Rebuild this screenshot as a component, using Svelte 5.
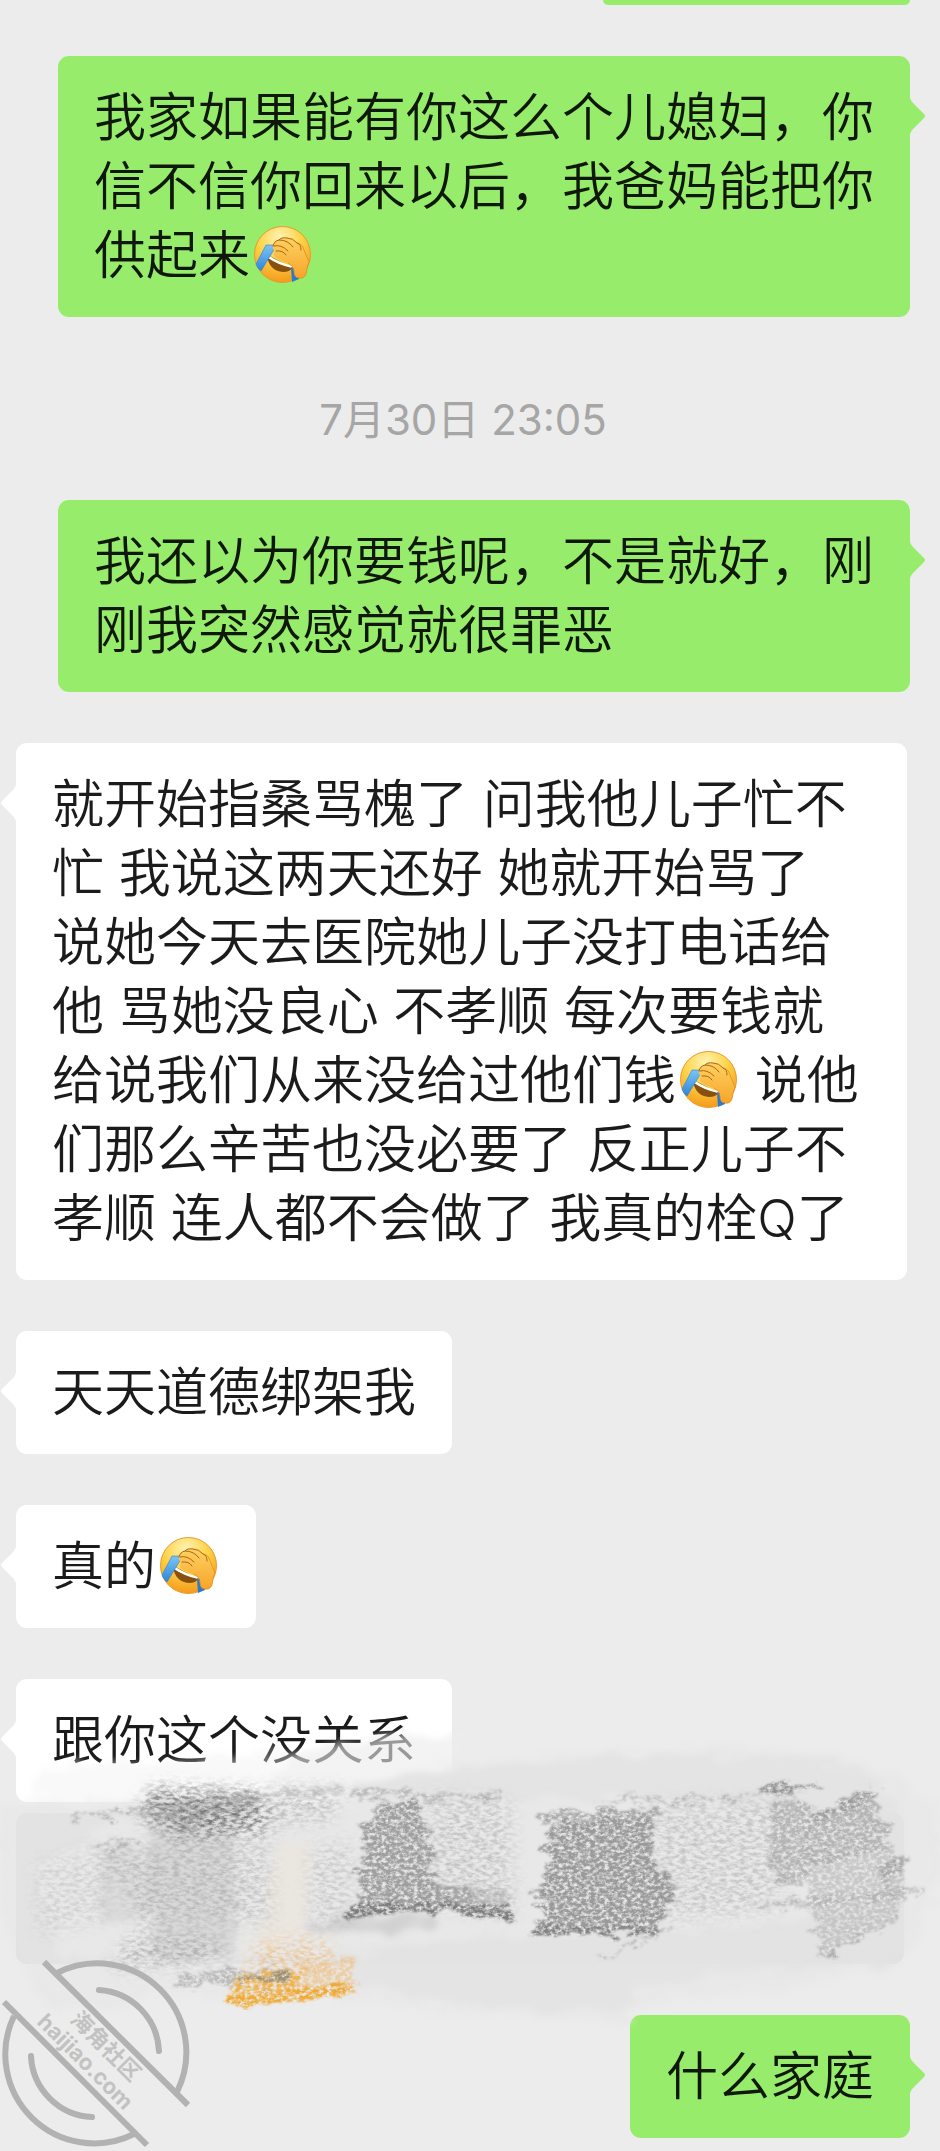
<script>
  // Messages above the time stamp, below it, and the ones under the crayon marks
  const earlier = [
    { from: 'me', text: '我家如果能有你这么个儿媳妇，你信不信你回来以后，我爸妈能把你供起来[facepalm]' }
  ];

  const later = [
    { from: 'me', text: '我还以为你要钱呢，不是就好，刚刚我突然感觉就很罪恶' },
    {
      from: 'her',
      text: '就开始指桑骂槐了 问我他儿子忙不忙 我说这两天还好 她就开始骂了 说她今天去医院她儿子没打电话给他 骂她没良心 不孝顺 每次要钱就给说我们从来没给过他们钱[facepalm] 说他们那么辛苦也没必要了 反正儿子不孝顺 连人都不会做了 我真的栓Q了'
    },
    { from: 'her', text: '天天道德绑架我' },
    { from: 'her', text: '真的[facepalm]' }
  ];

  const covered = { from: 'her', text: '跟你这个没关系' };
  const last = { from: 'me', text: '什么家庭' };

  // Split the text so that the emoji can be drawn between the parts
  function split(text) {
    return text.split('[facepalm]');
  }
</script>

{#snippet emoji()}
  <svg class="emoji" viewBox="0 0 57 57" role="img" aria-label="笑哭捂脸">
    <defs>
      <radialGradient id="face" cx="0.45" cy="0.2" r="0.8">
        <stop offset="0" stop-color="#fff3b4" />
        <stop offset="0.5" stop-color="#fdd245" />
        <stop offset="1" stop-color="#f59a1b" />
      </radialGradient>
      <linearGradient id="hand" x1="0" y1="0" x2="0" y2="1">
        <stop offset="0" stop-color="#fdd163" />
        <stop offset="1" stop-color="#f7a528" />
      </linearGradient>
      <linearGradient id="tear" x1="0" y1="0" x2="0" y2="1">
        <stop offset="0" stop-color="#7cc4f5" />
        <stop offset="1" stop-color="#2c86dc" />
      </linearGradient>
    </defs>
    <circle cx="28.5" cy="28.5" r="28" fill="url(#face)" stroke="#e99a2e" />
    <path d="M13 31 Q16 45 29 46 Q36 46 38 42 L16 30Z" fill="#87500f" />
    <path d="M14 29 Q26 37 39 40 L38 42 Q24 39 14 32Z" fill="#fff" />
    <path d="M12 19 L21 19 Q21 23 18 27 L7 45 Q3 42 2 38Z" fill="url(#tear)" stroke="#2f7fd0" stroke-width="0.6" />
    <path d="M37 41 L38 56 L45 53 L45 44Z" fill="#2879cf" />
    <path
      d="M19 20 Q20 15 25 14 Q27 11 33 12 Q39 12 43 17 Q48 17 50 24 L55 36 Q53 40 52 48 Q50 53 45 52 Q40 52 40 45 Q40 40 34 37 Q26 35 21 31 Q18 28 21 25 Q18 23 19 20Z"
      fill="url(#hand)"
    />
    <path
      d="M43 17 Q48 17 50 24 L55 36 Q53 40 52 48 Q50 53 45 52 Q40 52 40 45 Q40 40 34 37"
      fill="none"
      stroke="#e28a1f"
      stroke-width="0.8"
    />
    <path
      d="M19 20 Q20 15 25 14 Q34 14 39 21 M25 14 Q27 11 33 12 Q39 12 43 17 Q47 18 47 24 M20 20 Q27 18 34 25 M22 25 Q29 24 32 29"
      fill="none"
      stroke="#b0640f"
      stroke-width="1"
      stroke-linecap="round"
    />
  </svg>
{/snippet}

{#snippet bubble(message)}
  <div class="bubble {message.from}">
    {#each split(message.text) as part, i}{#if i > 0}{@render emoji()}{/if}{part}{/each}
    <svg class="tail" viewBox="0 0 16 36" aria-hidden="true">
      <path d="M0 0 Q1 3 3 5 L14 16 Q16 18 14 20 L3 31 Q1 33 0 36Z" />
    </svg>
  </div>
{/snippet}

<main class="chat">
  <div class="bubble me cut"></div>

  {#each earlier as message}
    {@render bubble(message)}
  {/each}

  <time datetime="07-30T23:05">7月30日 23:05</time>

  {#each later as message}
    {@render bubble(message)}
  {/each}

  <section class="smudged">
    {@render bubble(covered)}
    <div class="block"></div>

    <svg class="crayon" viewBox="0 -41 940 285" aria-hidden="true">
      <defs>
        <filter id="haze" x="-10%" y="-20%" width="120%" height="140%" color-interpolation-filters="sRGB">
          <feTurbulence type="fractalNoise" baseFrequency="0.03 0.09" numOctaves="4" seed="4" result="n" />
          <feDisplacementMap in="SourceGraphic" in2="n" scale="26" xChannelSelector="R" yChannelSelector="G" />
          <feGaussianBlur stdDeviation="3" />
        </filter>
        <filter id="grain" x="-10%" y="-20%" width="120%" height="140%" color-interpolation-filters="sRGB">
          <feTurbulence type="fractalNoise" baseFrequency="0.22 0.3" numOctaves="4" seed="8" result="n" />
          <feColorMatrix in="n" values="0 0 0 0 0  0 0 0 0 0  0 0 0 0 0  2.8 0 0 0 -0.7" result="dots" />
          <feTurbulence type="fractalNoise" baseFrequency="0.05 0.12" numOctaves="4" seed="5" result="wave" />
          <feDisplacementMap in="SourceGraphic" in2="wave" scale="26" xChannelSelector="R" yChannelSelector="G" result="rough" />
          <feGaussianBlur in="rough" stdDeviation="1" />
          <feComposite in2="dots" operator="in" />
        </filter>
        <filter id="dust" x="-20%" y="-30%" width="140%" height="160%" color-interpolation-filters="sRGB">
          <feTurbulence type="fractalNoise" baseFrequency="0.15 0.3" numOctaves="5" seed="21" result="n" />
          <feColorMatrix in="n" values="0 0 0 0 0  0 0 0 0 0  0 0 0 0 0  2.6 0 0 0 -0.95" result="dots" />
          <feGaussianBlur in="SourceGraphic" stdDeviation="9" />
          <feComposite in2="dots" operator="in" />
        </filter>
      </defs>

      <!-- pale base layer -->
      <g filter="url(#haze)">
        <path d="M0 82 L150 78 L350 62 L455 44 L640 32 L740 26 L850 40 L900 58 L940 90 L940 150 L905 240 L780 268 L640 282 L630 300 L460 292 L340 276 L160 272 L110 290 L40 280 L0 190Z" fill="#e5e5e5" fill-opacity="0.5" />
        <path d="M40 48 L240 36 L360 22 L460 10 L462 84 L250 92 L30 78Z" fill="#f0f0f0" fill-opacity="0.4" />
        <path d="M300 28 L455 12 L460 84 L250 84Z" fill="#e9e9e9" fill-opacity="0.35" />
        <path d="M350 60 L640 34 L860 44 L900 90 L900 240 L640 262 L620 292 L470 284 L350 262Z" fill="#e1e1e1" fill-opacity="0.75" />
      </g>
      <path d="M34 150 L110 100 L340 76 L720 80 L890 110 L880 190 L720 210 L500 216 L310 240 L60 240Z" fill="#e9e9e9" fill-opacity="0.7" filter="url(#haze)" />

      <!-- soft grey rubbing -->
      <g filter="url(#haze)">
        <path d="M150 74 L260 76 L235 110 L235 238 L150 236Z" fill="#bdbdbd" fill-opacity="0.36" />
        <path d="M100 130 L160 130 L150 200 L100 200Z" fill="#d0d0d0" fill-opacity="0.5" />
        <path d="M314 200 L436 196 L436 210 L310 212Z" fill="#c8c8c8" fill-opacity="0.7" />
        <path d="M275 122 L316 122 L305 220 L255 236Z" fill="#ebe5dd" fill-opacity="0.7" />
      </g>
      <g filter="url(#dust)" fill="#8d8d8d">
        <path d="M150 68 L265 72 L270 112 L180 120 L140 98Z" fill="#555" fill-opacity="0.75" />
        <path d="M100 130 L270 124 L272 202 L140 206Z" fill-opacity="0.4" />
        <path d="M35 145 L110 125 L110 200 L40 215Z" fill-opacity="0.25" />
        <path d="M130 215 L220 215 L230 240 L110 250Z" fill-opacity="0.55" />
        <path d="M275 68 L345 68 L330 100 L270 105Z" fill-opacity="0.5" />
        <path d="M430 76 L510 82 L515 195 L430 185Z" fill-opacity="0.4" />
        <path d="M650 86 L780 80 L780 190 L660 200Z" fill-opacity="0.38" />
        <path d="M310 130 L352 120 L350 200 L310 205Z" fill-opacity="0.35" />
      </g>

      <!-- hard strokes -->
      <g filter="url(#grain)" fill="none" stroke="#8f8f8f" stroke-linejoin="round">
        <path d="M68 98 L150 88 M92 127 L140 122" stroke-width="5" stroke-opacity="0.5" />
        <path d="M150 68 L185 65 L262 76 L345 68" stroke-width="7" stroke-opacity="0.3" />
        <path d="M158 92 L250 78 L170 104" stroke-width="16" stroke-opacity="0.4" />
        <path d="M168 264 L230 256 L292 254" stroke-width="12" stroke-opacity="0.5" />
        <path d="M355 76 L390 72 L430 76 L500 78" stroke-width="7" stroke-opacity="0.5" />
        <path d="M383 82 L420 82 L422 104 L438 134 L426 152 L440 164 L470 170 L480 186 L355 190 L362 158 L352 152 L368 136 L360 106 Z" fill="#8c8c8c" fill-opacity="0.8" stroke="none" />
        <path d="M348 190 L450 186 L512 193" stroke="#7d7d7d" stroke-width="10" />
        <path d="M430 164 L510 172 L510 188 L440 184Z" fill="#aaa" fill-opacity="0.6" stroke="none" />
        <path d="M540 98 L570 94 L660 94" stroke-width="9" stroke-opacity="0.7" />
        <path d="M560 100 L652 98 L655 150 L672 154 L668 182 L658 206 L538 206 L545 184 L534 172 L552 150 L542 126Z" fill="#8c8c8c" fill-opacity="0.85" stroke="none" />
        <path d="M532 210 L658 210" stroke="#848484" stroke-width="8" />
        <path d="M600 80 L720 80 L760 72 L815 66" stroke-width="4" stroke-opacity="0.5" />
        <path d="M765 72 L818 65" stroke-width="9" />
        <path d="M778 76 L810 78 L812 90 L804 164 L776 166 L766 120Z" fill="#9c9c9c" fill-opacity="0.65" stroke="none" />
        <path d="M808 104 L878 70 L878 98 L892 104 L886 128 L830 142 L800 150Z" fill="#a0a0a0" fill-opacity="0.7" stroke="none" />
        <path d="M812 99 L874 70" stroke-width="9" stroke-opacity="0.8" />
        <path d="M764 188 L822 180 L920 172" stroke="#a6a6a6" stroke-width="9" stroke-opacity="0.6" />
        <path d="M800 140 L890 128 L904 138 L906 160 L896 196 L820 236 L814 200Z" fill="#a8a8a8" fill-opacity="0.5" stroke="none" />
        <path d="M820 236 L896 200" stroke-width="4" stroke-opacity="0.6" />
        <path d="M882 156 L904 144" stroke-width="16" stroke-opacity="0.5" />
        <path d="M600 238 L670 208" stroke-width="3" stroke-opacity="0.5" />
      </g>

      <!-- orange crayon -->
      <path d="M256 224 L320 218 L345 250 L245 258Z" fill="#f0a94f" fill-opacity="0.55" filter="url(#dust)" />
      <g filter="url(#grain)" stroke="#eeb04c" fill="none">
        <path d="M236 254 L304 250 L300 268 L232 272Z" fill="#efb353" stroke="none" />
        <path d="M228 281 L290 275 L358 269" stroke-width="13" stroke="#efa935" />
        <path d="M300 242 L352 240 L354 266 L300 270Z" fill="#f0b668" fill-opacity="0.5" stroke="none" />
        <path d="M240 262 L292 257" stroke="#a08f6c" stroke-width="7" />
      </g>
    </svg>
  </section>

  {@render bubble(last)}

  <svg class="watermark" viewBox="0 0 210 211" role="img" aria-label="海角社区 haijiao.com">
    <g fill="none" stroke="#b2b2b2" stroke-width="6">
      <path d="M44 22 L188 165 M4 62 L147 205" />
      <path d="M57 33 A89 89 0 0 1 177 152 M14 76 A89 89 0 0 0 134 194" />
      <path d="M99 50 A64 64 0 0 1 159 111 M31 116 A64 64 0 0 0 92 177" stroke-linecap="round" />
    </g>
    <text transform="translate(106 106) rotate(45)" y="8" font-size="22">海角社区</text>
    <text transform="translate(85 122) rotate(45)" y="7" font-size="22">haijiao.com</text>
  </svg>
</main>

<style>
  :global(body) {
    margin: 0;
    background: #ececec;
  }

  .chat {
    position: relative;
    display: flex;
    flex-direction: column;
    gap: 51px;
    padding-bottom: 13px;
    overflow: hidden;
    font-family: Inter, "Noto Sans CJK SC", sans-serif;
  }

  .bubble {
    position: relative;
    padding: 27px 36px;
    border-radius: 11px;
    font-size: 52px;
    font-weight: 350;
    line-height: 69px;
  }

  .me {
    align-self: flex-end;
    margin: 0 30px 0 58px;
    background: #97ec6b;
    color: #0f180a;
  }

  .her {
    align-self: flex-start;
    margin: 0 33px 0 16px;
    background: #fff;
    color: #1b1b1b;
  }

  /* tail end of a message that has scrolled away */
  .cut {
    width: 235px;
    height: 5px;
    padding-top: 0;
    padding-bottom: 0;
    border-radius: 0 0 11px 11px;
  }

  .tail {
    position: absolute;
    top: 42px;
    left: 100%;
    width: 16px;
    height: 36px;
    fill: #97ec6b;
  }

  .her .tail {
    right: 100%;
    left: auto;
    fill: #fff;
    transform: scaleX(-1);
  }

  .emoji {
    width: 57px;
    height: 57px;
    margin: 0 3px 0 4px;
    vertical-align: -9px;
  }

  time {
    padding-top: 22px;
    margin: 0 30px 0 16px;
    color: #a6a6a6;
    font-size: 42px;
    line-height: 59px;
    text-align: center;
  }

  .smudged {
    position: relative;
    z-index: 1;
    display: flex;
    flex-direction: column;
    gap: 11px;
  }

  .block {
    height: 151px;
    margin: 0 36px 0 16px;
    border-radius: 11px;
    background: #e1e1e1;
  }

  .crayon {
    position: absolute;
    top: 0;
    left: 0;
    width: 100%;
    overflow: visible;
    pointer-events: none;
  }

  .watermark {
    position: absolute;
    bottom: 0;
    left: 0;
    z-index: 2;
    width: 210px;
    height: 211px;
  }

  .watermark text {
    fill: #c2c2c2;
    font-weight: 700;
    text-anchor: middle;
  }
</style>
